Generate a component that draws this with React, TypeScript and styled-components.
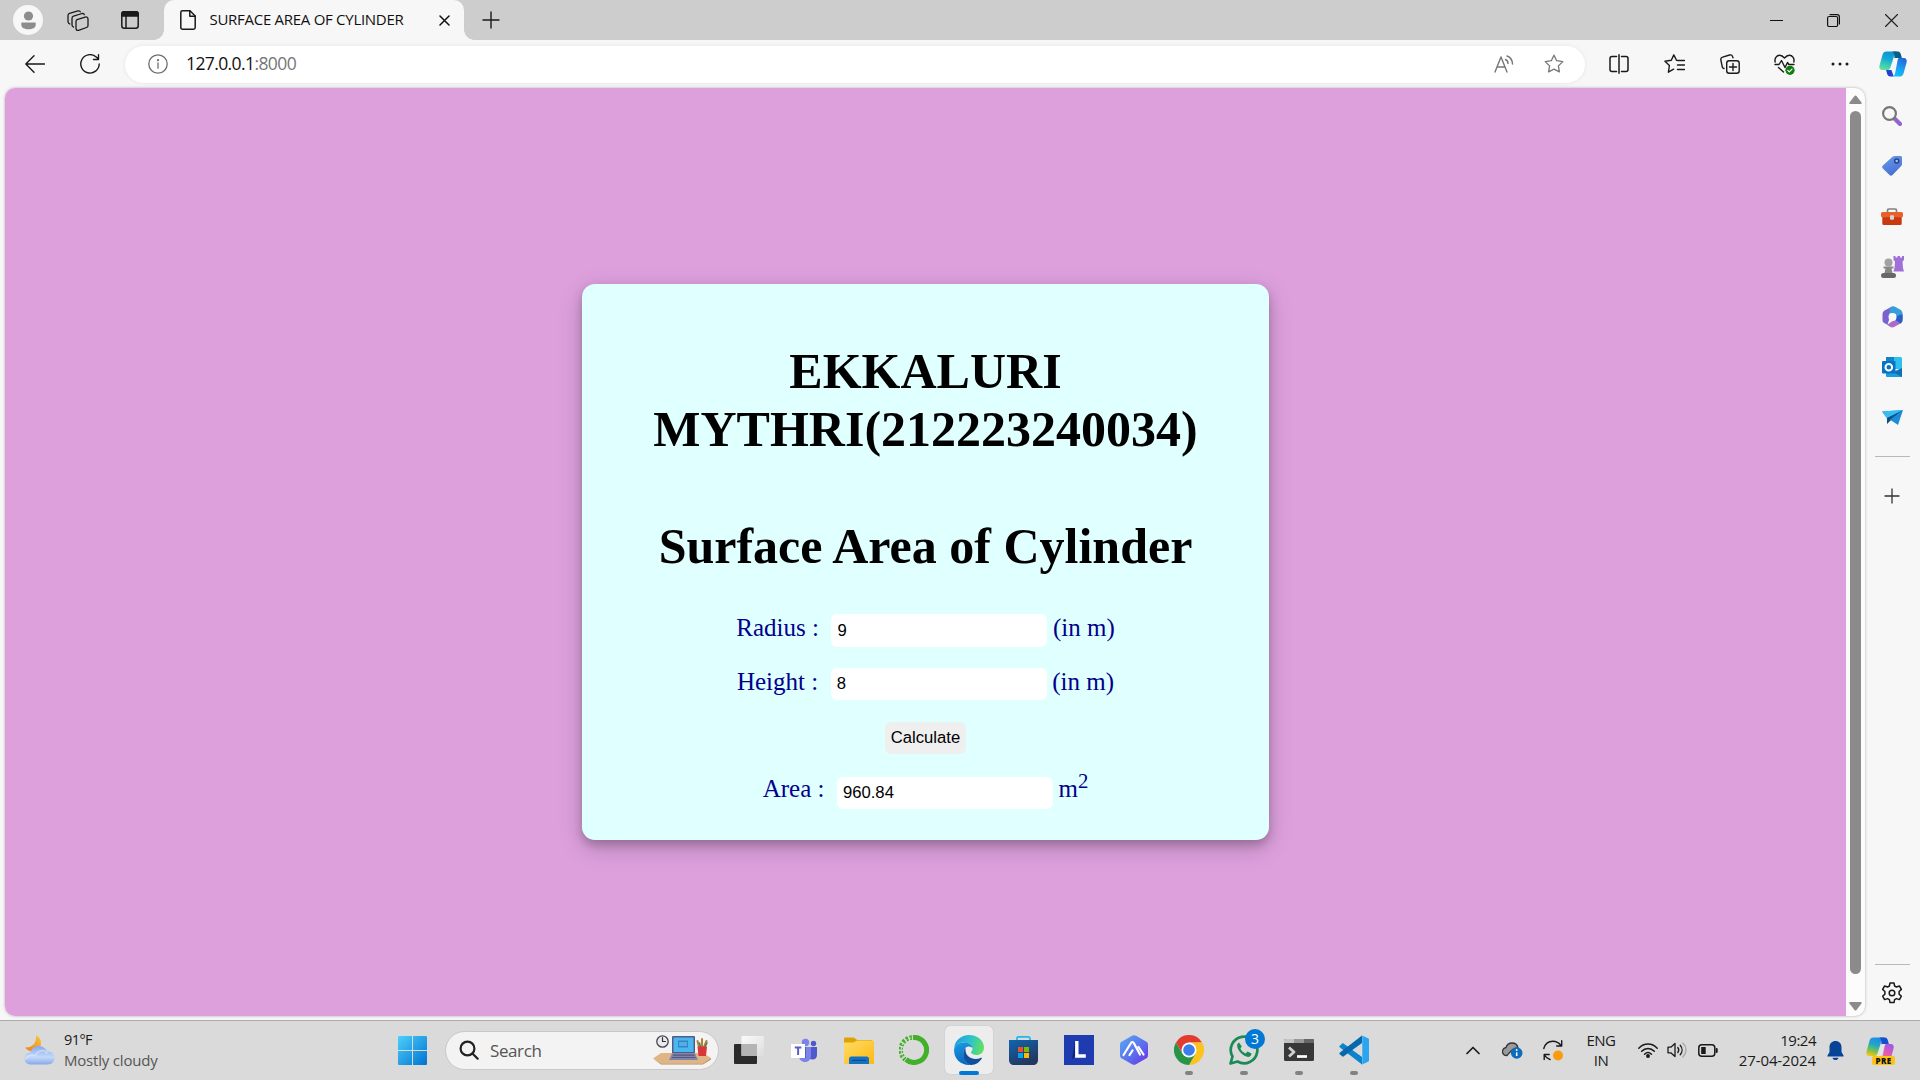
import React from 'react';
import styled, { createGlobalStyle } from 'styled-components';

const GlobalStyle = createGlobalStyle`
  * { box-sizing: border-box; }
  body { margin: 0; background: #f7f7f7; overflow: hidden; }
`;

const uiFont = '"Open Sans", "Noto Sans", sans-serif';

const Desktop = styled.div`
  width: 1920px;
  height: 1080px;
  display: flex;
  flex-direction: column;
  font-family: ${uiFont};
  color: #1b1b1b;
  overflow: hidden;
`;

const Cell = styled.div<{ $w: number }>`
  width: ${(p) => p.$w}px;
  height: 100%;
  flex: none;
  display: flex;
  align-items: center;
  justify-content: center;
`;

const Spacer = styled.div`
  flex: 1;
`;

const Label = styled.span<{ $size: number; $track?: number; $color?: string }>`
  font-size: ${(p) => p.$size}px;
  letter-spacing: ${(p) => p.$track ?? 0}px;
  color: ${(p) => p.$color ?? 'inherit'};
  white-space: nowrap;
`;

/* Browser chrome */

const TabStrip = styled.div`
  height: 40px;
  flex: none;
  display: flex;
  align-items: center;
  background: #cdcdcd;
`;

const Avatar = styled.div`
  width: 30px;
  height: 30px;
  border-radius: 50%;
  background: #f7f7f7;
  display: flex;
  align-items: center;
  justify-content: center;
`;

const Tab = styled.div`
  position: relative;
  width: 300px;
  height: 40px;
  margin-left: 4px;
  padding: 0 12px 0 16px;
  display: flex;
  align-items: center;
  background: #f7f7f7;
  border-radius: 10px 10px 0 0;
  color: #111;

  &::before,
  &::after {
    content: '';
    position: absolute;
    bottom: 0;
    width: 10px;
    height: 10px;
  }
  &::before {
    left: -10px;
    background: radial-gradient(circle at 0 0, transparent 9.5px, #f7f7f7 10px);
  }
  &::after {
    right: -10px;
    background: radial-gradient(circle at 100% 0, transparent 9.5px, #f7f7f7 10px);
  }
`;

const TabTitle = styled(Label)`
  margin-left: 13.5px;
  padding-bottom: 2px;
  flex: 1;
`;

const Toolbar = styled.div`
  height: 48px;
  flex: none;
  display: flex;
  align-items: center;
  background: #f7f7f7;
`;

const AddressBar = styled.div`
  width: 1460px;
  height: 37px;
  margin-right: 6px;
  border-radius: 19px;
  background: #fff;
  box-shadow: 0 0 4px rgba(0, 0, 0, 0.08);
  display: flex;
  align-items: center;
`;

const Url = styled.div`
  margin-left: 17px;
  padding-bottom: 3px;
`;

/* Page area */

const Workspace = styled.div`
  height: 932px;
  flex: none;
  display: flex;
  padding-left: 5px;
  background: #f7f7f7;
`;

const Viewport = styled.div`
  width: 1860px;
  height: 928px;
  display: flex;
  border-radius: 10px;
  overflow: hidden;
  background: #fcfcfc;
  box-shadow: 0 0 3px rgba(0, 0, 0, 0.3);
`;

const Page = styled.main`
  width: 1841px;
  height: 100%;
  padding: 196px 0 0 577px;
  background: #dda0dd;
`;

const Card = styled.section`
  width: 687px;
  height: 556px;
  padding-top: 58px;
  border-radius: 13px;
  background: #e0ffff;
  box-shadow: 0 5px 10px rgba(0, 0, 0, 0.2), 0 7.5px 25px rgba(0, 0, 0, 0.19);
  display: flex;
  flex-direction: column;
  align-items: center;
  font-family: "Liberation Serif", "Times New Roman", serif;
`;

const Heading = styled.h1<{ $gap?: number }>`
  margin: ${(p) => p.$gap ?? 0}px 0 0;
  width: 601px;
  text-align: center;
  color: #000;
  font-size: 50px;
  line-height: 58px;
  font-weight: 700;
`;

const Row = styled.div<{ $top: number }>`
  margin-top: ${(p) => p.$top}px;
  height: 33px;
  display: flex;
  align-items: flex-start;
`;

const FieldText = styled.label<{ $lift?: number }>`
  margin-top: ${(p) => -(p.$lift ?? 0)}px;
  font-size: 25px;
  line-height: 28px;
  color: #00008b;
  white-space: nowrap;

  sup {
    font-size: 20.8px;
    line-height: 0;
  }
`;

const Field = styled.input<{ $h?: number }>`
  width: 216px;
  height: ${(p) => p.$h ?? 33}px;
  margin: 0 5.5px 0 12.5px;
  padding: 1px 6px;
  border: 0;
  border-radius: 6px;
  outline: 0;
  background: #fff;
  color: #000;
  font: 16.67px "Liberation Sans", Arial, sans-serif;
`;

const CalcButton = styled.button`
  width: 81px;
  height: 32px;
  margin-top: 21px;
  padding: 0;
  border: 0;
  border-radius: 6px;
  background: #efefef;
  color: #000;
  font: 16.67px "Liberation Sans", Arial, sans-serif;
`;

const ScrollTrack = styled.div`
  width: 19px;
  height: 100%;
  padding: 7px 0 5px;
  display: flex;
  flex-direction: column;
  align-items: center;
`;

const ScrollThumb = styled.div`
  width: 11px;
  height: 863px;
  margin: 7px 0 27px;
  border-radius: 6px;
  background: #8b8b8b;
`;

const Sidebar = styled.aside`
  width: 55px;
  height: 932px;
  padding-right: 1px;
  display: flex;
  flex-direction: column;
  align-items: center;
`;

const SideItem = styled.div<{ $h?: number }>`
  height: ${(p) => p.$h ?? 50.2}px;
  flex: none;
  display: flex;
  align-items: center;
  justify-content: center;
`;

const Divider = styled.div`
  width: 35px;
  height: 1px;
  flex: none;
  background: #b9b9b9;
`;

/* Taskbar */

const Taskbar = styled.footer`
  height: 60px;
  flex: none;
  display: flex;
  align-items: center;
  padding: 0 12px 1px 0;
  border-top: 1px solid #ababab;
  background: #dadada;
`;

const Weather = styled.div`
  width: 385px;
  padding-left: 24px;
  display: flex;
  align-items: center;
  gap: 9px;
`;

const Lines = styled.div<{ $align?: string }>`
  display: flex;
  flex-direction: column;
  align-items: ${(p) => p.$align ?? 'flex-start'};
  padding-bottom: 1px;
  line-height: 20px;
`;

const SearchBox = styled.div`
  width: 274px;
  height: 39px;
  margin: 0 2px 0 5px;
  padding: 0 7px 0 13px;
  display: flex;
  align-items: center;
  gap: 11px;
  border-radius: 20px;
  border: 1px solid #c8c8c8;
  background: #f3f3f3;
`;

const AppCell = styled.div`
  width: 55px;
  height: 59px;
  position: relative;
  display: flex;
  align-items: center;
  justify-content: center;
`;

const AppTile = styled.div<{ $active?: boolean }>`
  width: 48px;
  height: 48px;
  border-radius: 5px;
  display: flex;
  align-items: center;
  justify-content: center;
  background: ${(p) => (p.$active ? '#ededed' : 'transparent')};
  box-shadow: ${(p) => (p.$active ? '0 0 1px rgba(0,0,0,.25)' : 'none')};
`;

const RunMark = styled.div<{ $active?: boolean }>`
  position: absolute;
  bottom: 5px;
  left: ${(p) => (p.$active ? 17.5 : 23.5)}px;
  width: ${(p) => (p.$active ? 20 : 8)}px;
  height: 4px;
  border-radius: 2px;
  background: ${(p) => (p.$active ? '#0078d4' : '#828282')};
`;

const Badge = styled.div`
  position: absolute;
  left: 29px;
  top: 8px;
  width: 20px;
  height: 20px;
  border-radius: 50%;
  background: #0078d4;
  color: #fff;
  font-size: 14px;
  line-height: 19px;
  text-align: center;
`;

const Clock = styled.div`
  width: 91px;
  padding-right: 3px;
  display: flex;
  justify-content: flex-end;
`;

/* Icons */

type IconProps = {
  w?: number;
  h?: number;
  box?: string;
  stroke?: string;
  sw?: number;
  children: React.ReactNode;
};

const Icon = ({ w = 20, h = w, box, stroke = 'none', sw = 1.3, children }: IconProps) => (
  <svg
    width={w}
    height={h}
    viewBox={box ?? `0 0 ${w} ${h}`}
    fill="none"
    stroke={stroke}
    strokeWidth={sw}
    strokeLinecap="round"
    strokeLinejoin="round"
  >
    {children}
  </svg>
);

const INK = '#1a1a1a';

const Copilot = ({ id, vivid }: { id: string; vivid?: boolean }) => (
  <Icon w={30} h={26} box="0 0 30 28">
    <defs>
      <linearGradient id={`${id}a`} x1="0.6" y1="0" x2="0.3" y2="1">
        <stop offset="0" stopColor={vivid ? '#1b8be8' : '#0d91d1'} />
        <stop offset="0.4" stopColor={vivid ? '#22a6c8' : '#13a9d7'} />
        <stop offset="0.75" stopColor={vivid ? '#7fc544' : '#3ccdb0'} />
        <stop offset="1" stopColor={vivid ? '#f5c518' : '#62dfa0'} />
      </linearGradient>
      <linearGradient id={`${id}b`} x1="0.7" y1="0" x2="0.3" y2="1">
        <stop offset="0" stopColor={vivid ? '#a156ee' : '#2567d8'} />
        <stop offset="0.6" stopColor={vivid ? '#ef5da0' : '#17a4f5'} />
        <stop offset="1" stopColor={vivid ? '#ff8a4c' : '#12c0fa'} />
      </linearGradient>
    </defs>
    <path d="M8 .5h12c-2 0-2.800 1.600-3.400 3.600l-4.200 13c-.7 2-1.800 3.400-3.800 3.400H4C.8 20.500-.2 18 .5 15.500L3.700 4.100C4.400 1.700 5.600.5 8 .5z" fill={`url(#${id}a)`} />
    <path d="M14.500.5h5.800c2 0 2.800 1.700 3.300 3.500l1 3.700h-8.100c.2-3-.2-5.500-2-7.200z" fill={vivid ? '#1450cc' : '#075e86'} />
    <path d="M7.500 20.500h5.800l2.500 7h-3.600c-2 0-2.900-1-3.500-3z" fill={vivid ? '#f39a2b' : '#1f43cf'} />
    <path d="M21 7.500h5c3.300 0 4.300 2 3.600 4.800l-3 11c-.8 2.800-2.300 4.200-5 4.200h-7.500c2 0 2.600-1.700 3.200-3.700l2.400-12.500c.3-2 .6-3.800 1.300-3.800z" fill={`url(#${id}b)`} />
    <path d="M18.300 7.500h3c-1 .4-1.500 1.400-1.900 2.800l-2.600 8.200c-.5 1.500-1.300 2-2.800 2h-3.500c1 0 1.700-.7 2.200-2l3-8.700c.5-1.500 1.200-2.300 2.600-2.300z" fill={vivid ? '#e6e6e6' : '#f7f7f7'} />
  </Icon>
);

const HexSuite = () => (
  <Icon w={21} h={22} box="0 0 21 22">
    <path d="M10 .5 3.500 4C1.500 5 .5 6.300.5 8.500V14c0 1.500.7 2.500 2 3.200l3 1.300 2-6V7.500l5-3.500z" fill="#7a63cc" />
    <path d="M10 .5c1-.6 2.500-.2 3.500.4l4.500 2.600c1.600 1 2.500 2.300 2.500 4v5.500L14 10.500V8L7.500 7.500 8 2z" fill="#369fd9" />
    <path d="M20.500 10v4c0 1.500-.7 2.800-2 3.500L12 21c-1.200.7-2.500.6-3.600 0L4 18c2 .5 3.500-.5 5-2z" fill="#a96ccb" />
    <path d="M20.500 8v6c0 1.500-.8 2.700-2 3.500l-4.500-3v-4z" fill="#2b5ec4" />
    <circle cx="10.500" cy="11" r="4" fill="#f7f7f7" />
  </Icon>
);

const WeatherIcon = () => (
  <Icon w={31} h={30} box="0 0 31 30">
    <defs>
      <linearGradient id="cloud" x1="0" y1="0" x2="0" y2="1">
        <stop offset="0" stopColor="#84aaf0" />
        <stop offset="0.6" stopColor="#c5d8f8" />
        <stop offset="1" stopColor="#86a9ea" />
      </linearGradient>
      <linearGradient id="moon" x1="1" y1="0" x2="0" y2="1">
        <stop offset="0" stopColor="#f9c63a" />
        <stop offset="1" stopColor="#ee7d15" />
      </linearGradient>
    </defs>
    <path d="M12 .5c5 2 6.500 8 3.500 12.500S5.500 18 1 12.500C8 13 13 8 12 .5z" fill="url(#moon)" />
    <path d="M7 29.500c-4 0-6.500-2.300-6.500-6s3-6 6-6c1-4 4-6.500 8-6.500 4.500 0 7.500 2.500 8.500 5.500 4.500-.5 7.500 2.500 7.500 6.300 0 4-2.800 6.700-7 6.700z" fill="url(#cloud)" />
    <path d="M2 24c2-4 6-5 9-3 3-6 9-7 12-3" stroke="#e3ecfb" strokeWidth="1.500" opacity=".6" />
  </Icon>
);

const DeskScene = () => (
  <Icon w={58} h={30} box="0 0 58 30">
    <path d="M0 23.500 8 18h42l8 5-8 5.500H8z" fill="#e0b585" />
    <path d="M0 23.500 8 28.500h42l8-5.500v1.500L50 29.500H8z" fill="#b98a58" />
    <circle cx="9.500" cy="6.500" r="5.700" fill="#e9e9ee" stroke="#44444c" strokeWidth="1.300" />
    <path d="M9.500 2.500v4h3" stroke="#333" strokeWidth="1.200" />
    <rect x="19" y="1" width="23" height="17.500" rx="1" fill="#555a86" />
    <rect x="20.500" y="2.500" width="20" height="14.500" fill="#4ab8f0" />
    <rect x="25" y="5.500" width="10" height="7" fill="#2f86c8" />
    <path d="M26.500 8h7M26.500 10h7" stroke="#86d3f5" strokeWidth="1" />
    <path d="M19 18.500h23l3 6.500H16z" fill="#8084ac" />
    <path d="M20.500 20.200h20.500M19.500 22.500h22.500" stroke="#53577f" strokeWidth="1.200" />
    <path d="M46 12l-1.500-6M49 12V4M51 12l2.500-6" stroke="#b9802d" strokeWidth="2" />
    <path d="M47.500 12l-1-4M52 12l2-4" stroke="#387f83" strokeWidth="1.500" />
    <path d="M44.500 11.500h9.500l-1 9.500h-7.500z" fill="#d93636" />
  </Icon>
);

const Edge = () => (
  <Icon w={30} box="0 0 30 30">
    <defs>
      <linearGradient id="ed1" x1="0" y1=".4" x2="1" y2=".6">
        <stop offset="0" stopColor="#1e9fdf" />
        <stop offset=".5" stopColor="#2dc3cb" />
        <stop offset="1" stopColor="#66e25a" />
      </linearGradient>
      <linearGradient id="ed2" x1="0" y1="0" x2=".3" y2="1">
        <stop offset="0" stopColor="#1b9de2" />
        <stop offset="1" stopColor="#0768c6" />
      </linearGradient>
    </defs>
    <path d="M.2 13C1 5.500 7 0 15 0c9 0 15 6 15 12.500 0 5-3.500 7.500-7.500 7.500-3.500 0-5.500-1.500-5.500-2.700 0-.8 1.500-1.300 1.500-3.800C18.500 10.500 15 7.500 10 7.500 5.500 7.500 2 9.500.2 13z" fill="url(#ed1)" />
    <path d="M0 15C.3 10.500 4.500 7.500 10 7.500c5 0 8.200 2.500 8.500 5.500-1-1-2.500-1.500-4-1.500-3 0-6 4.500-5 10C10.200 25.500 13 28.500 16.500 29.900 7 30.600 0 24 0 15z" fill="url(#ed2)" />
    <path d="M11.500 13c-4 4.500-3 13.500 5 16.900 4.500.3 9-2.400 11.300-6.400.4-.7-.1-1-.7-.7C20 26 11.500 22.500 11.500 15z" fill="#0f4f9e" />
  </Icon>
);

const Store = () => (
  <Icon w={29} h={30} box="0 0 29 30">
    <defs>
      <linearGradient id="st" x1="0" y1="0" x2=".5" y2="1">
        <stop offset="0" stopColor="#0e66b0" />
        <stop offset="1" stopColor="#24375f" />
      </linearGradient>
    </defs>
    <path d="M8 6V3.500C8 2.300 8.700 1.800 9.500 1.800h10c.9 0 1.500.6 1.500 1.700V6" stroke="#25b5ec" strokeWidth="1.700" />
    <path d="M0 5h29v20c0 3-2 5-5 5H5c-3 0-5-2-5-5z" fill="url(#st)" />
    <path d="M9 12h5v5H9z" fill="#f25022" /><path d="M15 12h5v5h-5z" fill="#7fba00" />
    <path d="M9 18h5v5H9z" fill="#00a4ef" /><path d="M15 18h5v5h-5z" fill="#ffb900" />
  </Icon>
);

const Chrome = () => (
  <Icon w={30} box="0 0 30 30">
    <path d="M2 7.500A15 15 0 0 1 28 7.500H15l-6.500 11z" fill="#e33b2e" />
    <path d="M28 7.500A15 15 0 0 1 15 30l6.500-11.200L22 11l-7-3.500z" fill="#fcc31e" />
    <path d="M2 7.500A15 15 0 0 0 15 30l6.500-11.200H8.500z" fill="#269547" />
    <circle cx="15" cy="15" r="7.500" fill="#fff" />
    <circle cx="15" cy="15" r="5.800" fill="#3b7ded" />
  </Icon>
);

const apps: { name: string; icon: React.ReactNode; running?: boolean; active?: boolean; badge?: string }[] = [
  {
    name: 'taskview',
    icon: (
      <Icon w={30} h={28}>
        <defs><linearGradient id="tv" x1="0" y1="0" x2="1" y2="1"><stop offset="0" stopColor="#fbfbfb" /><stop offset="1" stopColor="#dcdcdc" /></linearGradient></defs>
        <rect x="0" y="8" width="23" height="20" rx="1" fill="#2b2b2b" />
        <rect x="7.500" y="0" width="22.500" height="20" rx="1" fill="url(#tv)" />
        <rect x="7.500" y="8" width="15.500" height="12" fill="#b4b4b4" />
      </Icon>
    ),
  },
  {
    name: 'teams',
    icon: (
      <Icon w={26} h={25}>
        <circle cx="14.500" cy="4.500" r="3.700" fill="#7b83eb" />
        <circle cx="22.500" cy="5.500" r="2.700" fill="#5059c9" />
        <path d="M17 9h9v8c0 3-2 4.500-4.500 4.500S17 20 17 17z" fill="#5059c9" />
        <path d="M8 9h12v8.500c0 4-2.500 6.500-6 6.500s-6-2.500-6-6z" fill="#7b83eb" />
        <path d="M9 9h6v11H9z" fill="#3f48a0" opacity=".6" />
        <rect x="0" y="6" width="14" height="14" fill="#fff" />
        <path d="M3.800 9.500h6.600M7.100 9.500v7.500" stroke="#5b5fc7" strokeWidth="2" strokeLinecap="butt" />
      </Icon>
    ),
  },
  {
    name: 'files',
    icon: (
      <Icon w={30} h={27}>
        <defs><linearGradient id="fo" x1="0" y1="0" x2="1" y2="1"><stop offset="0" stopColor="#ffdc66" /><stop offset="1" stopColor="#fdb912" /></linearGradient></defs>
        <path d="M0 2C0 .8.700.5 1.500.5h8c1.500 0 2.500 2.500 4 2.500H28v6H0z" fill="#e0a106" />
        <path d="M0 5.500h9.500L13 3.500h15.500c1 0 1.500.5 1.500 1.500v21c0 .7-.4 1-1 1H1c-.6 0-1-.3-1-1z" fill="url(#fo)" />
        <path d="M5 27v-5c0-1.700 1-2.500 2.500-2.500h15c1.500 0 2.500.8 2.500 2.500v5z" fill="#1273c4" />
        <path d="M8.500 23.300h13" stroke="#0c4d8d" strokeWidth="1.300" />
      </Icon>
    ),
  },
  {
    name: 'anaconda',
    icon: (
      <Icon w={30}>
        <path d="M14 2.500A12.500 12.500 0 1 1 7 24.500" stroke="#43b02a" strokeWidth="5" strokeLinecap="butt" />
        <path d="M13 2.500A12.500 12.500 0 0 0 6 24.500" stroke="#43b02a" strokeWidth="4.500" strokeDasharray="2.400 1.500" strokeLinecap="butt" />
        <path d="M12 3A12.500 12.500 0 0 0 5 23" stroke="#dadada" strokeWidth="1" strokeDasharray="2 2.500" />
      </Icon>
    ),
  },
  { name: 'edge', icon: <Edge />, active: true },
  { name: 'store', icon: <Store /> },
  {
    name: 'lenovo',
    icon: (
      <Icon w={30}>
        <rect width="30" height="30" fill="#1e3caf" />
        <path d="M11 6v15l-3 3.500L11 6z" fill="#0c2870" />
        <path d="M12.800 6v15h9" stroke="#fff" strokeWidth="3.400" strokeLinecap="butt" strokeLinejoin="miter" />
      </Icon>
    ),
  },
  {
    name: 'arena',
    icon: (
      <Icon w={28} h={30}>
        <defs><linearGradient id="hx" x1="0" y1="0" x2="1" y2="1"><stop offset="0" stopColor="#5aa6f5" /><stop offset=".5" stopColor="#5a77ee" /><stop offset="1" stopColor="#6a2fe6" /></linearGradient></defs>
        <path d="M12 .8c1.300-.7 2.700-.7 4 0l10 5.700c1.300.7 2 1.800 2 3.300v10.500c0 1.500-.7 2.600-2 3.300l-10 5.700c-1.300.7-2.700.7-4 0L2 23.600c-1.300-.7-2-1.800-2-3.300V9.800c0-1.500.7-2.600 2-3.300z" fill="url(#hx)" />
        <path d="M3.500 20 11 8c.8-1.300 2-1.300 2.800 0L20 19.500M9.500 20l3-4.500M18.500 12l5 7.500" stroke="#fff" strokeWidth="2.200" />
      </Icon>
    ),
  },
  { name: 'chrome', icon: <Chrome />, running: true },
  {
    name: 'whatsapp',
    running: true,
    badge: '3',
    icon: (
      <Icon w={30}>
        <path d="M1.500 28.500 3.500 21.500A13.300 13.300 0 1 1 8.500 26.500z" stroke="#1c8a55" strokeWidth="2.700" />
        <path d="M10 7.500c-2 1-2.500 3.500-1 6.500 2 4 5.500 7 9 7.800 2.500.5 4.500-1 4.500-3.300l-4-2-1.800 2c-2.500-1-4.500-3-5.300-5.300l1.400-1.700z" fill="#1c8a55" />
      </Icon>
    ),
  },
  {
    name: 'terminal',
    running: true,
    icon: (
      <Icon w={30} h={22}>
        <rect width="30" height="22" rx="1.500" fill="#383838" />
        <path d="M0 4V1.500C0 .5.500 0 1.500 0H10v4z" fill="#c4c4c4" /><path d="M10 0h10v4H10z" fill="#989898" /><path d="M20 0h8.500c1 0 1.500.5 1.500 1.500V4H20z" fill="#666" />
        <path d="m5 8.500 5 4.500-5 4.500" stroke="#d0d0d0" strokeWidth="2.800" strokeLinecap="butt" />
        <path d="M13 17.500h10" stroke="#fff" strokeWidth="2.700" strokeLinecap="butt" />
      </Icon>
    ),
  },
  {
    name: 'vscode',
    running: true,
    icon: (
      <Icon w={30}>
        <path d="M.5 11 3 8.700c.6-.5 1.200-.5 1.800 0L23 22v7.500L.7 12.300C.2 11.900.1 11.400.5 11z" fill="#0a84cd" />
        <path d="M.5 19 3 21.300c.6.500 1.200.5 1.800 0L23 8V.5L.7 17.700c-.5.400-.6.900-.2 1.300z" fill="#0669ae" />
        <path d="M22 0 29 3.300c.7.300 1 .8 1 1.500v20.400c0 .7-.3 1.200-1 1.500L22 30c1 0 1.300-.7 1.300-1.500v-27C23.300.7 23 0 22 0z" fill="#2ba5ef" />
      </Icon>
    ),
  },
];

const sideIcons: React.ReactNode[] = [
  <Icon key="find" w={20}>
    <path d="m13 13 5 5" stroke="#9466cc" strokeWidth="4.200" />
    <circle cx="7.500" cy="7.500" r="6.400" stroke="#767676" strokeWidth="2.200" />
  </Icon>,
  <Icon key="tag" w={20}>
    <defs><linearGradient id="tg" x1="0" y1="0" x2=".4" y2="1"><stop offset="0" stopColor="#659eea" /><stop offset="1" stopColor="#4a70d5" /></linearGradient></defs>
    <path d="M10.500.800C11.200.2 12 0 13 0h5.500C19.500 0 20 .6 20 1.500V8c0 .8-.3 1.400-.8 2l-8.700 9c-1 1-2 1-3 0L.900 12.500c-1-1-1-2 0-3z" fill="url(#tg)" />
    <circle cx="14.700" cy="5" r="2" fill="#a9c4f2" stroke="#2a3e8c" strokeWidth="1.500" />
  </Icon>,
  <Icon key="tools" w={22} h={17}>
    <path d="M6.500 4V2.500c0-1 .5-1.500 1.500-1.500h6c1 0 1.500.5 1.500 1.500V4" stroke="#818181" strokeWidth="1.700" />
    <rect x="1.300" y="6" width="19.400" height="11" rx="1.500" fill="#c8390f" />
    <rect x="0" y="4" width="22" height="5.300" rx="1.500" fill="#e8602a" />
    <rect x="9" y="7.300" width="4" height="4.500" rx="1" fill="#d4d4d4" />
  </Icon>,
  <Icon key="games" w={23} h={22}>
    <path d="M12.500 0h2v1.500h2V0h2.500v1.500h2V0H23v4l-1.500 1.500.5 6.500 1 3.500H12.500l1-3.500.5-6.500L12.500 4z" fill="#a070d8" />
    <circle cx="7.500" cy="6.500" r="4" fill="#a2a2a2" />
    <path d="M2.500 10.500h10v2h-2l1 4.500h-8l1-4.500h-2z" fill="#888" />
    <rect x="0" y="17" width="15" height="5" rx="2.500" fill="#686868" />
  </Icon>,
  <HexSuite key="suite" />,
  <Icon key="mail" w={21} h={20}>
    <path d="M5.500 0h13c.8 0 1.500.7 1.500 1.500V12H4V1.500C4 .7 4.700 0 5.500 0z" fill="#2bc0ee" />
    <path d="M4 0h8v6H4z" fill="#1283c6" /><path d="M20 11v8c0 .6-.4 1-1 1H5c-1 0-1-1-1-1v-5h9z" fill="#1b9ce0" />
    <path d="m20 11-8 4.500L20 20z" fill="#126db2" />
    <rect x="0" y="4" width="13.500" height="12.500" rx="1" fill="#0872c5" />
    <circle cx="6.800" cy="10.200" r="3.300" stroke="#fff" strokeWidth="2" />
  </Icon>,
  <Icon key="send" w={21} h={15}>
    <path d="M0 1.500 21 0 11.500 11.500 5 8.500z" fill="#23a2e3" />
    <path d="M21 0 5 7.500V14l3.500-3.500z" fill="#0c4d83" />
    <path d="M21 0 8 9.500 16 15z" fill="#1a8cd8" />
    <path d="M0 1.500 21 0 5 8z" fill="#37bdf0" />
  </Icon>,
];

const starPath = 'm10 1.200 2.700 5.500 6.100.9-4.400 4.300 1 6-5.400-2.800-5.400 2.800 1-6L1.200 7.600l6.100-.9z';

const Tabs = () => (
  <TabStrip>
    <Cell $w={56}>
      <Avatar>
        <Icon w={15} h={19}>
          <circle cx="7.500" cy="5" r="4.600" fill="#8d8d8d" />
          <path d="M.3 11.500h14.400v2.300c0 3-3 4.500-7.200 4.500S.3 16.800.3 13.800z" fill="#8d8d8d" />
        </Icon>
      </Avatar>
    </Cell>
    <Cell $w={43}>
      <Icon w={22} h={21} stroke={INK} sw={1.300}>
        <path d="m10 9.700 8.200-2.600c1.500-.5 2.800.3 2.800 1.800v6.600c0 1-.5 1.700-1.500 2l-8 2.800c-1.300.4-2.500-.3-2.500-1.700v-7c0-1 .3-1.600 1-1.900z" />
        <path d="m6.500 17-.7-.5c-.7-.4-.8-1-.8-1.700V8.500c0-1.200.5-2 1.500-2.300L15 3.500c1.200-.3 2 .2 2.300 1.200M2.800 14l-1-.7C1.200 12.700 1 12 1 11.200V5.600c0-1.200.5-1.900 1.500-2.200L11 .9c1.200-.3 2 .1 2.300 1" />
      </Icon>
    </Cell>
    <Cell $w={61}>
      <Icon w={18} stroke={INK} sw={1.500}>
        <rect x=".8" y=".8" width="16.400" height="16.400" rx="2.500" />
        <path d="M.8 3.300C.8 1.800 1.800.8 3.300.8h11.400c1.500 0 2.500 1 2.500 2.500V5H.8z" fill={INK} />
        <path d="M5 5v12" />
      </Icon>
    </Cell>
    <Tab>
      <Icon w={16} h={20} stroke={INK} sw={1.500}>
        <path d="M.8 2.500C.8 1.500 1.500.8 2.500.8H10L15.200 6v11.500c0 1-.7 1.700-1.700 1.700h-11c-1 0-1.700-.7-1.700-1.700z" />
        <path d="M9.800.8v5.400h5.400" />
      </Icon>
      <TabTitle $size={15} $track={-0.28}>SURFACE AREA OF CYLINDER</TabTitle>
      <Cell $w={16}><Icon w={11} stroke="#111" sw={1.500}><path d="m1 1 9 9M10 1l-9 9" /></Icon></Cell>
    </Tab>
    <Cell $w={53}><Icon w={18} stroke={INK} sw={1.400}><path d="M9 1v16M1 9h16" /></Icon></Cell>
    <Spacer />
    <Cell $w={57.5}><Icon w={13} stroke="#111" sw={1.200}><path d="M.5 6.500h12" /></Icon></Cell>
    <Cell $w={57.5}>
      <Icon w={13} stroke="#111" sw={1.200}><rect x=".6" y="2.500" width="10" height="10" rx="1.500" /><path d="M3 .6h7c1.500 0 2.400.9 2.400 2.400v7" /></Icon>
    </Cell>
    <Cell $w={57.5}><Icon w={13} stroke="#222" sw={1.200}><path d="m.5.500 12 12M12.500.500l-12 12" /></Icon></Cell>
  </TabStrip>
);

const NavButton = styled.div<{ $w: number; $after?: number }>`
  width: ${(p) => p.$w}px;
  margin-right: ${(p) => p.$after ?? 0}px;
  flex: none;
  display: flex;
  justify-content: center;
  padding-bottom: 1px;
`;

const InfoMark = styled.div`
  margin-left: 22px;
  width: 22px;
  display: flex;
  justify-content: center;
`;

const Navigation = () => (
  <Toolbar>
    <NavButton $w={70}><Icon w={20} h={18} stroke={INK} sw={1.400}><path d="M19.500 9H.8M9 .8.800 9 9 17.200" /></Icon></NavButton>
    <NavButton $w={40} $after={15}><Icon w={20} stroke={INK} sw={1.400}><path d="M19.200 10a9.200 9.200 0 1 1-3.300-7.200L18.500 5M18.500.8V5.500h-5" /></Icon></NavButton>
    <AddressBar>
      <InfoMark>
        <Icon w={20} stroke="#6e6e6e" sw={1.300}><circle cx="10" cy="10" r="9.200" /><path d="M10 9v5.200" /><circle cx="10" cy="6.200" r=".5" fill="#6e6e6e" /></Icon>
      </InfoMark>
      <Url>
        <Label $size={17.5} $track={-0.6} $color="#111">127.0.0.1</Label>
        <Label $size={17.5} $track={-0.6} $color="#767676">:8000</Label>
      </Url>
      <Spacer />
      <Cell $w={36}>
        <Icon w={20} h={18} stroke="#767676" sw={1.400}>
          <path d="M1 17 7 2l6 15M3 12h8M11.500 4.500c1.700.8 2.500 2.200 2.500 4M13 1c3.500 1.200 5.300 4 5.500 8" />
        </Icon>
      </Cell>
      <Cell $w={63}><Icon w={20} stroke="#767676" sw={1.300}><path d={starPath} /></Icon></Cell>
    </AddressBar>
    <Cell $w={56}>
      <Icon w={20} stroke={INK} sw={1.500}><path d="M7.500 2.500H3c-1.300 0-2 .7-2 2v11c0 1.300.7 2 2 2h4.500M12.500 2.500H17c1.300 0 2 .7 2 2v11c0 1.300-.7 2-2 2h-4.500M10 .8v18.400" /></Icon>
    </Cell>
    <Cell $w={55}>
      <Icon w={21} h={20} stroke={INK} sw={1.400}><path d="m14.500 6.500-2-.3L9.800.9 7.300 6.200l-6.400 1 4.500 4.300-1 6.700 5.200-3M13.500 6.500h7M13.500 11h7M13.500 15.500h7" /></Icon>
    </Cell>
    <Cell $w={55}>
      <Icon w={20} stroke={INK} sw={1.400}>
        <rect x="6.700" y="6.700" width="12.500" height="12.500" rx="2.500" />
        <path d="M13 9.500v7M9.500 13h7M4 14.500l-.8-.4c-.5-.3-.9-.9-1-1.500L.9 6.200C.6 4.700 1.200 3.600 2.600 3.200l7-2.200c1.500-.4 2.600.2 3 1.600l.4 1.200" />
      </Icon>
    </Cell>
    <Cell $w={55}>
      <Icon w={21} stroke={INK} sw={1.400}>
        <path d="M1.200 8C.2 4.500 2.500 1.200 5.700 1.200c2 0 3.500 1.300 4.800 2.800 1.300-1.500 2.800-2.800 4.800-2.800 3.200 0 5.500 3.300 4.500 6.800M1 10.500h4l2.500-4 3.500 7 2.500-5 1.300 2H20M4.500 13.500l5 4.500" />
        <circle cx="16" cy="16.300" r="4.600" fill="#107c10" stroke="none" />
        <path d="m13.800 16.300 1.500 1.500 2.700-2.700" stroke="#fff" strokeWidth="1.200" />
      </Icon>
    </Cell>
    <Cell $w={56}><Icon w={18} h={4}><circle cx="2" cy="2" r="1.500" fill={INK} /><circle cx="9" cy="2" r="1.500" fill={INK} /><circle cx="16" cy="2" r="1.500" fill={INK} /></Icon></Cell>
    <Cell $w={50}><Copilot id="top" /></Cell>
  </Toolbar>
);

const CopilotBox = styled.div`
  position: relative;
  width: 30px;
  height: 27px;
  display: flex;
  align-items: flex-start;
`;

const PreTag = styled.span`
  position: absolute;
  left: 7px;
  top: 19px;
  width: 23px;
  height: 9px;
  border-radius: 2px;
  background: #fcc419;
  color: #111;
  font-size: 8px;
  font-weight: 800;
  line-height: 9px;
  text-align: center;
  letter-spacing: 0.3px;
`;

const SideList = styled.div`
  height: 368px;
  padding-top: 3px;
  flex: none;
  display: flex;
  flex-direction: column;
`;

export default function App() {
  return (
    <Desktop>
      <GlobalStyle />
      <Tabs />
      <Navigation />
      <Workspace>
        <Viewport>
          <Page>
            <Card>
              <Heading>EKKALURI MYTHRI(212223240034)</Heading>
              <Heading $gap={59}>Surface Area of Cylinder</Heading>
              <Row $top={39}>
                <FieldText>Radius :</FieldText>
                <Field defaultValue="9" />
                <FieldText>(in m)</FieldText>
              </Row>
              <Row $top={21}>
                <FieldText>Height :</FieldText>
                <Field defaultValue="8" $h={32} />
                <FieldText>(in m)</FieldText>
              </Row>
              <CalcButton>Calculate</CalcButton>
              <Row $top={23}>
                <FieldText $lift={2}>Area :</FieldText>
                <Field defaultValue="960.84" $h={32} />
                <FieldText $lift={2}>m<sup>2</sup></FieldText>
              </Row>
            </Card>
          </Page>
          <ScrollTrack>
            <Icon w={13} h={9}><path d="M5.500 1c.6-.8 1.400-.8 2 0l5 6.500c.6.900.2 1.500-.7 1.500H1.200C.3 9-.100 8.400.5 7.500z" fill="#8b8b8b" /></Icon>
            <ScrollThumb />
            <Icon w={13} h={10}><path d="M5.500 9c.6.800 1.400.8 2 0l5-6.500c.6-.9.2-1.500-.7-1.500H1.200C.3 1-.1 1.600.5 2.500z" fill="#8b8b8b" /></Icon>
          </ScrollTrack>
        </Viewport>
        <Sidebar>
          <SideList>
            {sideIcons.map((icon, i) => <SideItem key={i}>{icon}</SideItem>)}
          </SideList>
          <Divider />
          <SideItem $h={78}><Icon w={16} stroke="#333" sw={1.300}><path d="M8 1v14M1 8h14" /></Icon></SideItem>
          <Spacer />
          <Divider />
          <SideItem $h={55}>
            <Icon w={22} stroke={INK} sw={1.500}>
              <path d="M9 1h4l.6 3 1.800 1 3-1 2 3.400-2.300 2.100v2.600l2.300 2.100-2 3.400-3-1-1.800 1-.6 3H9l-.6-3-1.800-1-3 1-2-3.400 2.300-2.100V9.500L1.600 7.400l2-3.400 3 1 1.800-1z" />
              <circle cx="11" cy="11" r="2.800" />
            </Icon>
          </SideItem>
        </Sidebar>
      </Workspace>
      <Taskbar>
        <Weather>
          <WeatherIcon />
          <Lines>
            <Label $size={14.5} $track={-0.6}>91°F</Label>
            <Label $size={15} $track={-0.2} $color="#555">Mostly cloudy</Label>
          </Lines>
        </Weather>
        <Cell $w={55}>
          <Icon w={29}>
            <defs><linearGradient id="win" gradientUnits="userSpaceOnUse" x1="0" y1="0" x2="29" y2="29"><stop offset="0" stopColor="#4cd0fb" /><stop offset="1" stopColor="#0072d1" /></linearGradient></defs>
            <path d="M1.500 0H14v14H0V1.500C0 .5.500 0 1.500 0zM15 0h12.500c1 0 1.500.5 1.500 1.500V14H15zM0 15h14v14H1.500C.5 29 0 28.500 0 27.500zM15 15h14v12.500c0 1-.5 1.500-1.500 1.500H15z" fill="url(#win)" />
          </Icon>
        </Cell>
        <SearchBox>
          <Icon w={20} stroke="#222" sw={2.200}><circle cx="8.500" cy="8.500" r="6.900" /><path d="m13.700 13.700 5 5" /></Icon>
          <Label $size={17} $track={-0.4} $color="#555">Search</Label>
          <Spacer />
          <DeskScene />
        </SearchBox>
        {apps.map((a) => (
          <AppCell key={a.name}>
            <AppTile $active={a.active}>{a.icon}</AppTile>
            {(a.running || a.active) && <RunMark $active={a.active} />}
            {a.badge && <Badge>{a.badge}</Badge>}
          </AppCell>
        ))}
        <Spacer />
        <Cell $w={34}><Icon w={14} h={9} stroke={INK} sw={1.700}><path d="m1 7.500 6-6 6 6" /></Icon></Cell>
        <Cell $w={44}>
          <Icon w={21} h={17}>
            <path d="M5 13.500c-3 0-4.500-1.500-4.500-4 0-2.200 1.500-3.500 3.500-4C5 2.500 7 1 10 1c3.500 0 5.500 2 6 5-5 0-7 3-11 7.500z" fill="#9a9a9a" stroke="#333" strokeWidth="1.300" />
            <circle cx="14.700" cy="11" r="5.800" fill="#0f6cbd" />
            <path d="M14.700 10.300v3.700" stroke="#fff" strokeWidth="1.500" strokeLinecap="butt" /><circle cx="14.700" cy="8" r=".9" fill="#fff" />
          </Icon>
        </Cell>
        <Cell $w={38}>
          <Icon w={20} h={21} stroke={INK} sw={1.400}>
            <path d="M.8 8.500C2 4 5.500 1.200 9.800 1.200c3.500 0 6.200 1.600 8.200 4.300M18.700.8V6h-5M7 19.500c-2.500-.7-4.300-2.200-5.500-4.500M1.200 19.500V14.500h5" />
            <circle cx="15" cy="15.500" r="5" fill="#fb9a0c" stroke="none" />
          </Icon>
        </Cell>
        <Cell $w={58}>
          <Lines $align="center">
            <Label $size={15} $track={-0.5}>ENG</Label>
            <Label $size={15} $track={-0.5}>IN</Label>
          </Lines>
        </Cell>
        <Cell $w={36}>
          <Icon w={20} h={15} stroke={INK} sw={1.500}>
            <path d="M.8 5.200C6-.3 14-.3 19.200 5.200M3.700 8.300c3.500-3.800 9.100-3.800 12.600 0M6.600 11.200c2-2 4.800-2 6.800 0" />
            <circle cx="10" cy="13" r="1.200" fill={INK} />
          </Icon>
        </Cell>
        <Cell $w={22}>
          <Icon w={20} h={16} stroke={INK} sw={1.300}>
            <path d="M1 5.200h2.800L8 1.500v13l-4.200-3.700H1zM10.800 5.500c1.200 1.500 1.200 3.500 0 5M13.200 3.300c2.500 2.800 2.500 6.600 0 9.400" />
            <path d="M15.800 1c4.200 4 4.200 10 0 14" stroke="#aaa" />
          </Icon>
        </Cell>
        <Cell $w={40}>
          <Icon w={20} h={13} stroke={INK} sw={1.500}>
            <rect x=".8" y=".8" width="16" height="11.400" rx="3" />
            <rect x="3.200" y="3" width="4.500" height="7" fill={INK} stroke="none" /><path d="M18.700 5v3" strokeWidth="2" />
          </Icon>
        </Cell>
        <Clock>
          <Lines $align="flex-end">
            <Label $size={15} $track={-0.5}>19:24</Label>
            <Label $size={15} $track={-0.1}>27-04-2024</Label>
          </Lines>
        </Clock>
        <Cell $w={33}>
          <Icon w={17} h={19}>
            <path d="M8.500 0c3.500 0 6 2.600 6 6v5l2 3.500c.3.600.1 1-.5 1H1c-.6 0-.8-.4-.5-1l2-3.500V6c0-3.400 2.500-6 6-6zM5.500 16.700h6c-.4 1.500-1.500 2.300-3 2.300s-2.600-.8-3-2.300z" fill="#054496" />
          </Icon>
        </Cell>
        <Cell $w={56}>
          <CopilotBox>
            <Copilot id="task" vivid />
            <PreTag>PRE</PreTag>
          </CopilotBox>
        </Cell>
      </Taskbar>
    </Desktop>
  );
}
